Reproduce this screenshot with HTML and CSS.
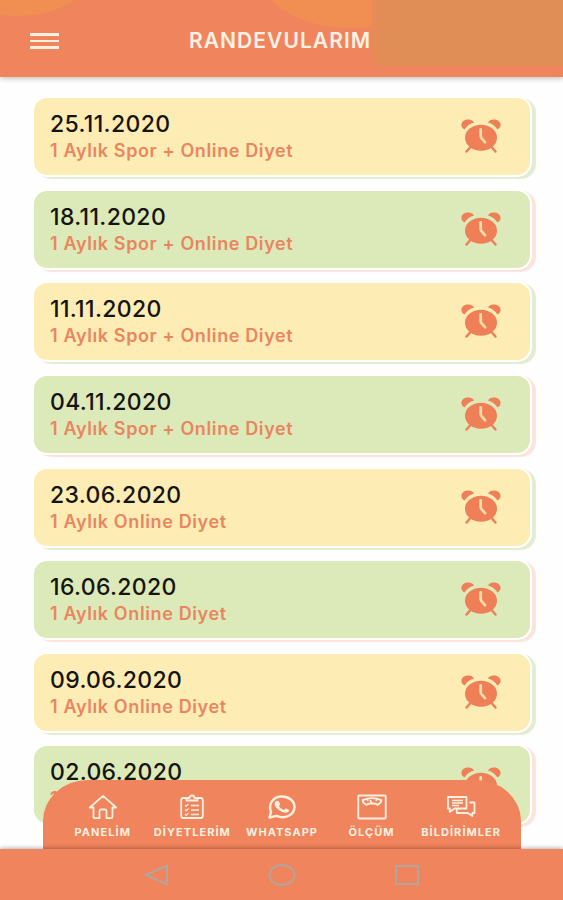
FILE: index.html
```html
<!DOCTYPE html>
<html lang="tr">
<head>
  <meta charset="utf-8">
  <meta name="viewport" content="width=device-width">
  <title>Randevularım</title>
  <link rel="stylesheet" href="styles.css">
</head>
<body>
  <svg class="symbols" width="0" height="0">
    <symbol id="alarm" viewBox="0 0 40 35">
      <path fill="currentColor" d="M3.500 10.500C-1.800 7.500.2 1.400 6 .5c3.800-.5 6.500 1 7 3.100C9 4.800 6 7 3.500 10.500zM36.500 10.500C41.800 7.500 39.800 1.400 34 .5c-3.800-.5-6.500 1-7 3.100C31 4.800 34 7 36.500 10.500z"/>
      <path stroke="currentColor" stroke-width="2.500" stroke-linecap="round" d="M9 28.500l-3.500 4M31 28.500l3.500 4"/>
      <ellipse cx="20" cy="18.700" rx="16" ry="13" fill="currentColor"/>
      <path class="hands" d="M19.700 10.500v6.500q0 1.200.8 2.200l3.500 4"/>
    </symbol>
  </svg>
  <div id="header">
    <span class="blob left"></span>
    <span class="blob middle"></span>
    <span class="blob right"></span>
    <a href="javascript:;" class="burger"><i></i><i></i><i></i></a>
    <h1>RANDEVULARIM</h1>
  </div>
  <div id="list">
    <div class="card yellow">
      <div><p class="date">25.11.2020</p><p class="plan">1 Aylık Spor + Online Diyet</p></div>
      <svg class="alarm"><use href="#alarm"/></svg>
    </div>
    <div class="card green">
      <div><p class="date">18.11.2020</p><p class="plan">1 Aylık Spor + Online Diyet</p></div>
      <svg class="alarm"><use href="#alarm"/></svg>
    </div>
    <div class="card yellow">
      <div><p class="date">11.11.2020</p><p class="plan">1 Aylık Spor + Online Diyet</p></div>
      <svg class="alarm"><use href="#alarm"/></svg>
    </div>
    <div class="card green">
      <div><p class="date">04.11.2020</p><p class="plan">1 Aylık Spor + Online Diyet</p></div>
      <svg class="alarm"><use href="#alarm"/></svg>
    </div>
    <div class="card yellow">
      <div><p class="date">23.06.2020</p><p class="plan">1 Aylık Online Diyet</p></div>
      <svg class="alarm"><use href="#alarm"/></svg>
    </div>
    <div class="card green">
      <div><p class="date">16.06.2020</p><p class="plan">1 Aylık Online Diyet</p></div>
      <svg class="alarm"><use href="#alarm"/></svg>
    </div>
    <div class="card yellow">
      <div><p class="date">09.06.2020</p><p class="plan">1 Aylık Online Diyet</p></div>
      <svg class="alarm"><use href="#alarm"/></svg>
    </div>
    <div class="card green">
      <div><p class="date">02.06.2020</p><p class="plan">1 Aylık Online Diyet</p></div>
      <svg class="alarm"><use href="#alarm"/></svg>
    </div>
  </div>
  <div id="bottom">
    <div class="menu">
      <a href="javascript:;">
        <svg width="30" height="26" viewBox="0 0 30 26"><path d="M5.500 13.500H1.800L15 1.800l13.200 11.700h-3.700v9.200q0 1.500-1.500 1.500h-4.500V17q0-1.500-1.500-1.500h-4q-1.500 0-1.500 1.500v7.200H7q-1.500 0-1.500-1.500z"/></svg>
        <span>PANELİM</span>
      </a>
      <a href="javascript:;">
        <svg width="30" height="26" viewBox="0 0 30 26"><path d="M9.500 4H6.200Q4.200 4 4.200 6v16q0 2 2 2h17.600q2 0 2-2V6q0-2-2-2h-3.300M9.500 6.500V4h3q0-2.500 2.500-2.500T17.500 4h3v2.500z"/><path class="thin" d="M8 11l1.200 1.200L11.500 10M14 11.500h8M8 15.500l1.200 1.200 2.300-2.200M14 16h8M8 20l1.200 1.200 2.300-2.200M14 20.500h8"/></svg>
        <span>DİYETLERİM</span>
      </a>
      <a href="javascript:;">
        <svg width="30" height="26" viewBox="0 0 30 26"><path class="bold" d="M2.500 23.500L4 17.800C.8 10.500 6 2.500 15 2.500c7 0 12.500 4.500 12.500 10.300 0 8.200-9.500 12.700-18 9z"/><path class="solid" d="M10 7h1.200q.6 0 .8.500l1 2.400q.2.500-.1.900l-1.100 1.200q1.800 2.800 5.200 4.200l1.300-1.500q.4-.4.900-.2l2.500 1.200q.5.300.4.800-.5 2.300-3.400 2.300-3.700 0-7.500-3.200-3.600-3.200-3.600-5.600 0-2 1.300-2.800.5-.2 1.100-.2z"/></svg>
        <span>WHATSAPP</span>
      </a>
      <a href="javascript:;">
        <svg width="30" height="26" viewBox="0 0 30 26"><rect x="1.300" y="1.500" width="27.400" height="23" rx=".8"/><path d="M5.500 6.200Q15 2.200 24.500 6.200q-.5 3.500-4 4.600-1.800-1.300-4-1.300h-3q-2.200 0-4 1.300-3.500-1.100-4-4.600zM15 9.300l-2-3M10 5l1 2M20 5l-1 2"/></svg>
        <span>ÖLÇÜM</span>
      </a>
      <a href="javascript:;">
        <svg width="30" height="26" viewBox="0 0 30 26"><path d="M2 3h18.500v11.500H8.500L3.800 18v-3.500H2zM23.500 8.500h5V19h-2.200v3l-4.500-3h-11v-4"/><path class="thin" d="M6 6.500h11M6 9h11M6 11.500h7"/></svg>
        <span>BİLDİRİMLER</span>
      </a>
    </div>
    <div class="navbar">
      <svg width="26" height="24" viewBox="0 0 26 24"><path d="M23 2.500v19L2 12z"/></svg>
      <svg width="28" height="24" viewBox="0 0 28 24"><ellipse cx="14" cy="12" rx="12.500" ry="10"/></svg>
      <svg width="26" height="24" viewBox="0 0 26 24"><rect x="2" y="3" width="22" height="18"/></svg>
    </div>
  </div>
</body>
</html>
```
FILE: styles.css
```css
*{
  box-sizing: border-box;
}
body{
  display: flex;
  flex-direction: column;
  overflow: hidden;
  height: 900px;
  margin: 0;
  font-family: Inter, "Liberation Sans", sans-serif;
  background: #fefefe;
}
h1, p{
  margin: 0;
}
.symbols{
  position: absolute;
}
#header{
  position: relative;
  z-index: 1;
  display: flex;
  flex: none;
  align-items: center;
  height: 77px;
  padding: 5px 30px 0;
  background: #f0845c;
  box-shadow: 0 2px 5px rgba(0,0,0,.22);
  clip-path: inset(0 0 -10px 0);
}
#header h1{
  position: relative;
  margin-left: 130px;
  color: #fff2e4;
  font-size: 21px;
  font-weight: 600;
  line-height: 28px;
  letter-spacing: 1.050px;
}
.blob{
  position: absolute;
  border-radius: 50%;
  background: #f18f52;
}
.blob.left{
  top: -64px;
  left: -52px;
  width: 140px;
  height: 80px;
}
.blob.middle{
  top: -72px;
  left: 262px;
  width: 180px;
  height: 100px;
}
.blob.right{
  top: 0;
  right: 0;
  width: 191px;
  height: 66px;
  border-radius: 0 0 0 8px;
  background: linear-gradient(90deg, #e68b57, #e08d56 20px);
}
.burger{
  position: relative;
  display: flex;
  flex-direction: column;
  gap: 4px;
  width: 29px;
}
.burger i{
  height: 2.500px;
  background: #fff0e0;
}
#list{
  display: flex;
  flex: 1;
  flex-direction: column;
  gap: 11.600px;
  min-height: 0;
  padding: 19.300px 31px 0 32px;
}
.card{
  display: flex;
  flex: none;
  align-items: center;
  justify-content: space-between;
  height: 81px;
  padding: 0 29px 0 16px;
  border: 2.500px solid #fff;
  border-radius: 15px;
  width: 500px;
}
.yellow{
  background: #feecb5;
  box-shadow: 4px 2px 1px #e3ecd2;
}
.green{
  background: #dceab9;
  box-shadow: 4px 2px 1px #fbe3de;
}
.date{
  color: #161410;
  font-size: 23px;
  font-weight: 500;
  line-height: 28px;
  letter-spacing: .350px;
}
.plan{
  color: #e9865f;
  font-size: 18px;
  font-weight: 600;
  line-height: 25px;
  letter-spacing: .620px;
}
.alarm{
  width: 40px;
  height: 35px;
  color: #ee7f57;
}
.hands{
  fill: none;
  stroke: #fbdca5;
  stroke-width: 2.800;
  stroke-linecap: round;
}
#bottom{
  position: relative;
  flex: none;
  height: 51px;
}
/* sits over the end of the list */
.menu{
  position: absolute;
  bottom: 51px;
  left: 43px;
  display: grid;
  grid-template-columns: repeat(5, 1fr);
  width: 478px;
  height: 69px;
  padding: 14px 15px 0;
  border-radius: 45px 45px 0 0 / 41px 41px 0 0;
  background: #f0845c;
}
.menu a{
  display: flex;
  flex-direction: column;
  align-items: center;
  gap: 4px;
  color: #fff0e0;
  text-decoration: none;
}
.menu span{
  font-size: 11px;
  font-weight: 700;
  line-height: 16px;
  letter-spacing: 1.050px;
  white-space: nowrap;
}
.menu svg{
  fill: none;
  stroke: #fff0e0;
  stroke-width: 1.800;
  stroke-linejoin: round;
}
.menu .thin{
  stroke-width: 1.300;
}
.menu .bold{
  stroke-width: 2.400;
}
.menu .solid{
  fill: #fff0e0;
  stroke: none;
}
.navbar{
  position: relative;
  display: flex;
  align-items: center;
  justify-content: center;
  gap: 98px;
  height: 51px;
  background: #f0845c;
  box-shadow: 0 -1px 4px rgba(0,0,0,.3);
}
.navbar svg{
  fill: none;
  stroke: #b3a59e;
  stroke-width: 2;
}
```
